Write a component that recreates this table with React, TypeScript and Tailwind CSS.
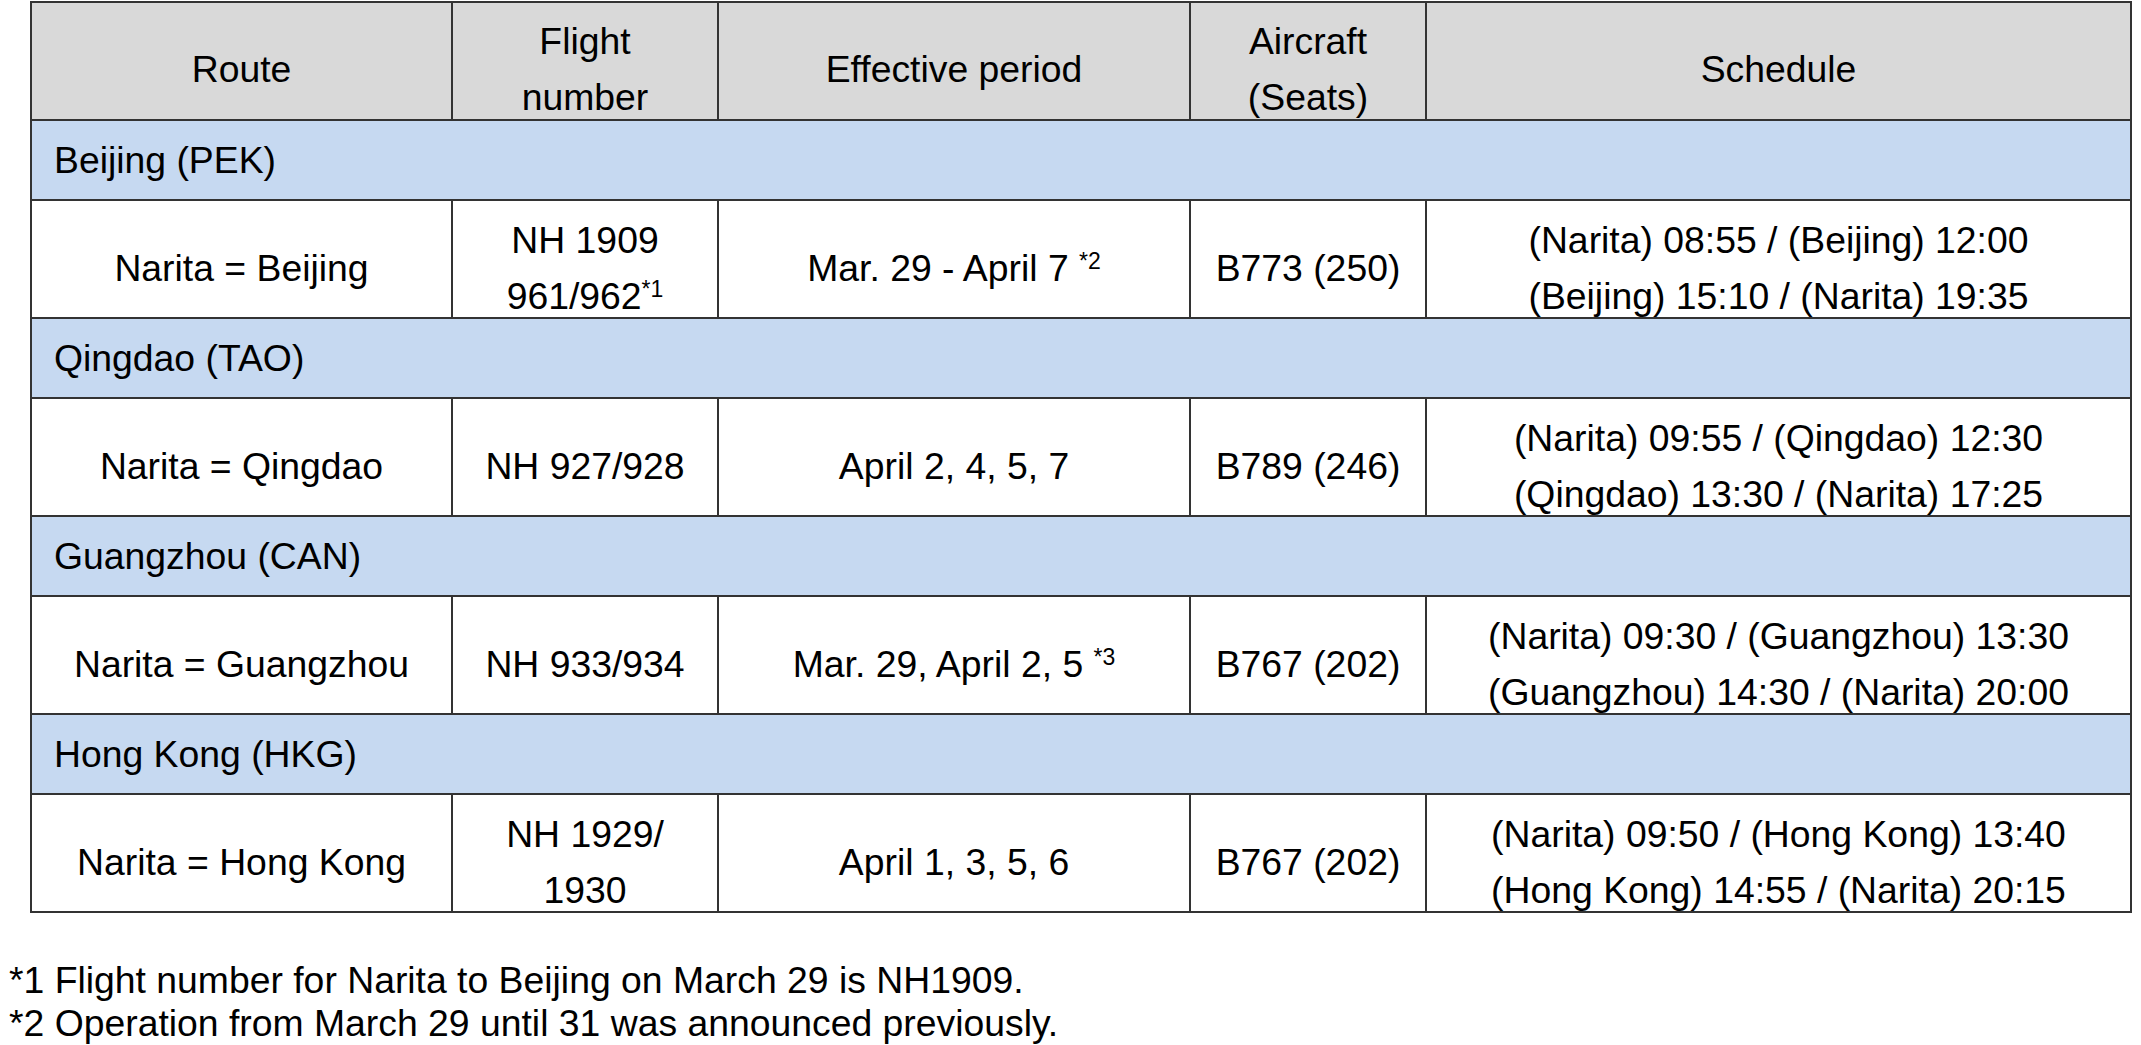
import React from "react";

const cols = "grid grid-cols-[421px_266px_472px_236px_705px] grid-rows-[auto]";
const cell =
  "min-h-0 overflow-visible border-r-2 border-b-2 border-[#333333] flex items-center justify-center text-center";

type Row = {
  group: string;
  route: string;
  flight: React.ReactNode;
  period: React.ReactNode;
  aircraft: string;
  sched: [string, string];
};

const Sup = ({ children }: { children: React.ReactNode }) => (
  <sup className="text-[23px]">{children}</sup>
);

const rows: Row[] = [
  {
    group: "Beijing (PEK)",
    route: "Narita = Beijing",
    flight: (
      <>
        NH 1909
        <br />
        961/962<Sup>*1</Sup>
      </>
    ),
    period: (
      <>
        Mar. 29 - April 7 <Sup>*2</Sup>
      </>
    ),
    aircraft: "B773 (250)",
    sched: ["(Narita) 08:55 / (Beijing) 12:00", "(Beijing) 15:10 / (Narita) 19:35"],
  },
  {
    group: "Qingdao (TAO)",
    route: "Narita = Qingdao",
    flight: "NH 927/928",
    period: "April 2, 4, 5, 7",
    aircraft: "B789 (246)",
    sched: ["(Narita) 09:55 / (Qingdao) 12:30", "(Qingdao) 13:30 / (Narita) 17:25"],
  },
  {
    group: "Guangzhou (CAN)",
    route: "Narita = Guangzhou",
    flight: "NH 933/934",
    period: (
      <>
        Mar. 29, April 2, 5 <Sup>*3</Sup>
      </>
    ),
    aircraft: "B767 (202)",
    sched: ["(Narita) 09:30 / (Guangzhou) 13:30", "(Guangzhou) 14:30 / (Narita) 20:00"],
  },
  {
    group: "Hong Kong (HKG)",
    route: "Narita = Hong Kong",
    flight: (
      <>
        NH 1929/
        <br />
        1930
      </>
    ),
    period: "April 1, 3, 5, 6",
    aircraft: "B767 (202)",
    sched: ["(Narita) 09:50 / (Hong Kong) 13:40", "(Hong Kong) 14:55 / (Narita) 20:15"],
  },
];

export default function App() {
  return (
    <div
      className="w-[2141px] h-[1045px] bg-white text-black overflow-hidden text-[37.33px] leading-[56px]"
      style={{ fontFamily: '"Liberation Sans", Arial, sans-serif' }}
    >
      <div className="ml-[30px] mt-[1px] w-[2102px] border-l-2 border-t-2 border-[#333333]">
        {/* header */}
        <div className={`${cols} bg-[#d9d9d9]`}>
          <div className={`${cell} h-[118px] pt-[15px]`}>Route</div>
          <div className={`${cell} h-[118px] pt-[15px]`}>
            <div className="shrink-0">
              Flight
              <br />
              number
            </div>
          </div>
          <div className={`${cell} h-[118px] pt-[15px]`}>Effective period</div>
          <div className={`${cell} h-[118px] pt-[15px]`}>
            <div className="shrink-0">
              Aircraft
              <br />
              (Seats)
            </div>
          </div>
          <div className={`${cell} h-[118px] pt-[15px]`}>Schedule</div>
        </div>

        {rows.map((r) => (
          <React.Fragment key={r.group}>
            <div className="h-[80px] bg-[#c6d9f1] border-r-2 border-b-2 border-[#333333] flex items-center pl-[22px]">
              {r.group}
            </div>
            <div className={`${cols} bg-white`}>
              <div className={`${cell} h-[118px] pt-[17px]`}>{r.route}</div>
              <div className={`${cell} h-[118px] pt-[17px]`}>
                <div className="shrink-0">{r.flight}</div>
              </div>
              <div className={`${cell} h-[118px] pt-[17px]`}>
                <div className="shrink-0">{r.period}</div>
              </div>
              <div className={`${cell} h-[118px] pt-[17px]`}>{r.aircraft}</div>
              <div className={`${cell} h-[118px] pt-[17px]`}>
                <div className="shrink-0">
                  {r.sched[0]}
                  <br />
                  {r.sched[1]}
                </div>
              </div>
            </div>
          </React.Fragment>
        ))}
      </div>

      <div className="mt-[46px] pl-[9px] leading-[43px]">
        <div>*1 Flight number for Narita to Beijing on March 29 is NH1909.</div>
        <div>*2 Operation from March 29 until 31 was announced previously.</div>
      </div>
    </div>
  );
}
